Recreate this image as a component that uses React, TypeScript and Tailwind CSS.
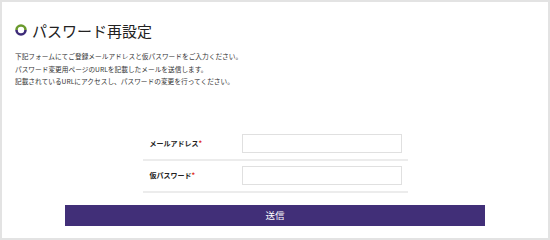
import React from "react";

export default function App() {
  const jp = "font-['Noto_Sans_CJK_JP','Noto_Sans',sans-serif]";
  return (
    <div className={`w-[550px] h-[240px] bg-white border-2 border-[#e3e3e3] box-border ${jp} text-[#333]`}>
      <div className="flex items-center pl-[13px] pt-[12px] h-[32px] box-content">
        <svg width="12" height="12" viewBox="0 0 12 12" className="shrink-0">
          <path d="M1.5 6 A4.5 4.5 0 0 1 10.5 6" fill="none" stroke="#6a9a2c" strokeWidth="2.6" />
          <path d="M10.5 6 A4.5 4.5 0 0 1 1.5 6" fill="none" stroke="#3d2b78" strokeWidth="2.6" />
        </svg>
        <h1 className="ml-[5px] text-[15px] leading-none font-normal text-[#222]">パスワード再設定</h1>
      </div>
      <div className="pl-[13px] pt-[4px] text-[6.7px] leading-[12.5px] text-[#333]">
        <p>下記フォームにてご登録メールアドレスと仮パスワードをご入力ください。</p>
        <p>パスワード変更用ページのURLを記載したメールを送信します。</p>
        <p>記載されているURLにアクセスし、パスワードの変更を行ってください。</p>
      </div>
      <div className="w-[265px] mx-auto mt-[40px]">
        <div className="flex items-center h-[33px] border-b-2 border-[#ececec]">
          <div className="w-[99px] pl-[7px] text-[7px] font-bold text-[#222]">
            メールアドレス<span className="text-[#e0261a]">*</span>
          </div>
          <div className="w-[160px] h-[19px] border border-[#e0e0e0]" />
        </div>
        <div className="flex items-center h-[32px] border-b-2 border-[#ececec]">
          <div className="w-[99px] pl-[7px] text-[7px] font-bold text-[#222]">
            仮パスワード<span className="text-[#e0261a]">*</span>
          </div>
          <div className="w-[160px] h-[19px] border border-[#e0e0e0]" />
        </div>
      </div>
      <div className="flex justify-center mt-[12px]">
        <button className="w-[420px] h-[21px] bg-[#412f78] text-white text-[9.5px] flex items-center justify-center">
          送信
        </button>
      </div>
    </div>
  );
}
